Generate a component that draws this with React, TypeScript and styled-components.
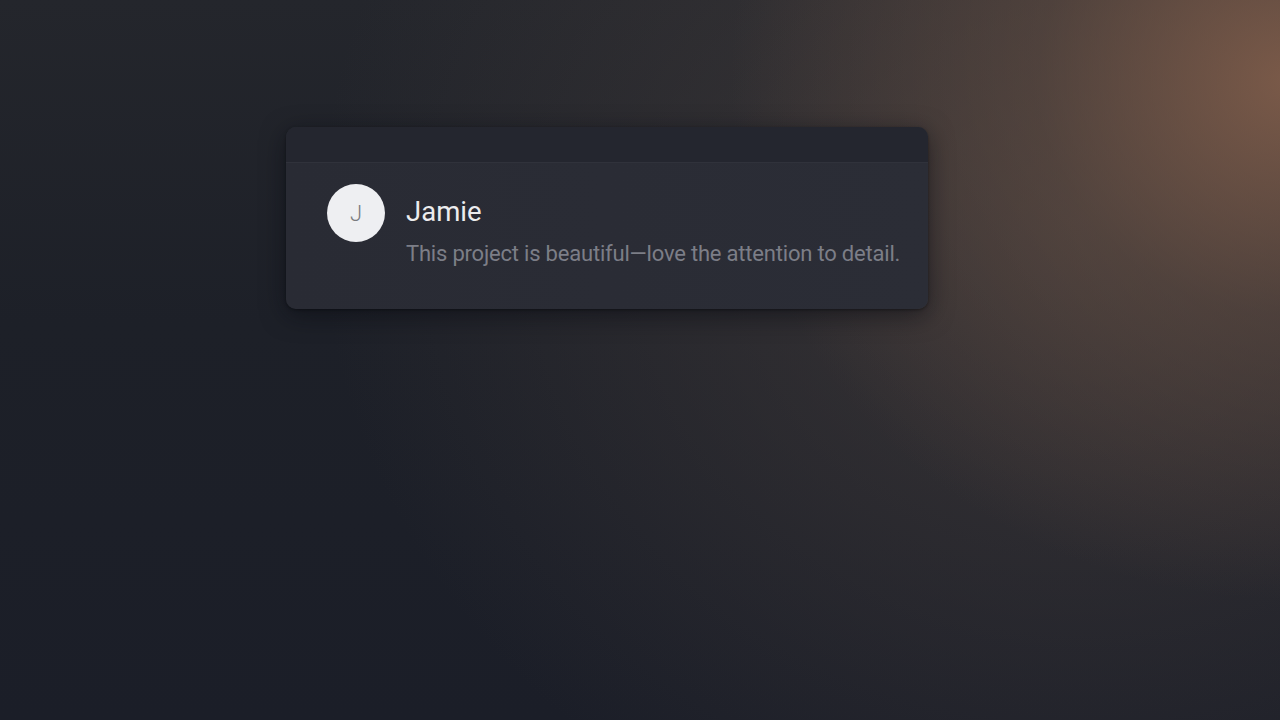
import React from "react";
import styled, { createGlobalStyle } from "styled-components";

const Global = createGlobalStyle`
  html, body {
    margin: 0;
    padding: 0;
    width: 100%;
    height: 100%;
  }
  body {
    font-family: Roboto, "Noto Sans", Arial, sans-serif;
    background: #1b1e27;
  }
`;

const App = () => {
  return (
    <>
      <Global />
      <Scene>
        <Card>
          <CardTop />
          <CardBody>
            <Avatar>J</Avatar>
            <Content>
              <Name>Jamie</Name>
              <Message>This project is beautiful—love the attention to detail.</Message>
            </Content>
          </CardBody>
        </Card>
      </Scene>
    </>
  );
};

export default App;

const Scene = styled.div`
  width: 1280px;
  height: 720px;
  overflow: hidden;
  box-sizing: border-box;
  padding: 127px 0 0 286px;
  background:
    radial-gradient(ellipse 560px 520px at 1290px 80px, rgba(140, 100, 78, 0.8), rgba(110, 84, 70, 0.45) 45%, rgba(60, 55, 55, 0) 100%),
    radial-gradient(ellipse 760px 680px at 1080px 220px, rgba(78, 68, 64, 0.6), rgba(40, 40, 45, 0) 100%),
    linear-gradient(180deg, #24262c 0%, #1d2028 45%, #1b1e28 100%);
`;

const Card = styled.div`
  width: 642px;
  border-radius: 10px;
  overflow: hidden;
  background: linear-gradient(90deg, #292b34 0%, #2b2d36 100%);
  box-shadow: 0 6px 24px rgba(8, 10, 16, 0.55), 0 1px 3px rgba(0, 0, 0, 0.4);
`;

const CardTop = styled.div`
  height: 35px;
  background: #24262f;
  border-bottom: 1px solid #30323b;
`;

const CardBody = styled.div`
  display: flex;
  align-items: flex-start;
  gap: 21px;
  padding: 21px 20px 42px 41px;
`;

const Avatar = styled.div`
  width: 58px;
  height: 58px;
  flex-shrink: 0;
  border-radius: 50%;
  background: #eeeff2;
  color: #7a7b80;
  display: flex;
  align-items: center;
  justify-content: center;
  font-size: 22px;
  font-weight: 300;
`;

const Content = styled.div`
  display: flex;
  flex-direction: column;
  padding-top: 12px;
`;

const Name = styled.div`
  font-size: 27.5px;
  line-height: 32px;
  color: #ececee;
  font-weight: 400;
`;

const Message = styled.div`
  margin-top: 13px;
  font-size: 22px;
  line-height: 26px;
  color: #7c7e87;
  letter-spacing: -0.2px;
  white-space: nowrap;
`;
